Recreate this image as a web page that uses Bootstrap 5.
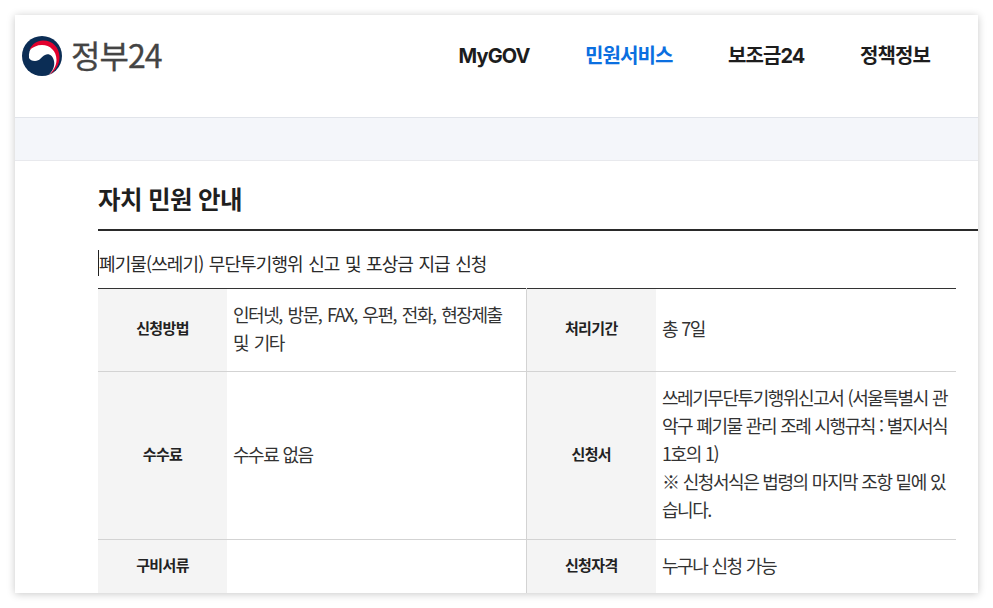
<!DOCTYPE html>
<html lang="ko">
<head>
<meta charset="utf-8">
<title>자치 민원 안내</title>
<link href="https://cdn.jsdelivr.net/npm/bootstrap@5.3.0/dist/css/bootstrap.min.css" rel="stylesheet">
<style>
html,body{height:100%;overflow:hidden;background:#fff}
body{padding:15px;font-family:"Noto Sans CJK KR","Noto Sans",sans-serif;color:#222;letter-spacing:-.04em}
.sheet{width:963px;height:578px;overflow:hidden;background:#fff;box-shadow:0 1px 8px rgba(0,0,0,.22)}
.topbar{height:103px;padding:0 48px 20px 7px;border-bottom:1px solid #e1e4ea}
.brand{font-size:32px;line-height:1;color:#444;letter-spacing:-.03em;gap:9px}
.brand span{padding-bottom:4px;-webkit-text-stroke:.3px #444}
.menu{gap:55.500px}
.menu a{font-family:Inter,"Noto Sans CJK KR",sans-serif;font-size:20px;font-weight:700;color:#1d1d1d;text-decoration:none;letter-spacing:-.045em}
.menu a.on{color:#0b6fe0}
.band{height:43px;background:#f4f6fa;border-bottom:1px solid #e8e9ed}
.body-wrap{padding-left:83px}
.ttl{font-size:24.5px;font-weight:700;line-height:1.3;margin:0;padding:22px 0 14px;border-bottom:2px solid #2a2a2a;color:#1f1f1f}
.sub{font-size:18px;line-height:26px;padding:19px 0 12px;color:#2a2a2a;letter-spacing:-.05em;word-spacing:1.3px}
.sub span{border-left:1px solid #222}
.tbl{width:858px;table-layout:fixed;margin:0;border-top:1px solid #333;--bs-table-color:#333}
.tbl th,.tbl td{padding:0 6px 2px;line-height:28px;border-bottom:1px solid #d3d3d3;vertical-align:middle}
.tbl th{background:#f4f4f4;text-align:center;font-size:15px;font-weight:700;color:#222}
.tbl .sep{border-left:1px solid #d3d3d3}
.tbl td{font-size:18px;letter-spacing:-.08em;word-spacing:.5px;word-break:break-all}
.tbl .r1>*{padding-bottom:4px}
.tbl td.roomy{padding-right:12px;word-spacing:2px}
.tbl td.longcell{padding:0 3px 4px 6px}
.r1>*{height:83px}.r2>*{height:168px}.r3>*{height:54px}
.c-a{width:129px}.c-b{width:299px}.c-c{width:130px}.c-d{width:300px}
</style>
</head>
<body>
<div class="sheet">
  <header class="topbar d-flex align-items-center justify-content-between">
    <div class="brand d-flex align-items-center">
      <svg width="40" height="40" viewBox="0 0 40 40" aria-hidden="true">
        <circle cx="20" cy="20" r="20" fill="#0b2d55"/>
        <path d="M7 22C6 12 13 6 21 6 31 6 36 13 36 22 36 30 32 36 26 39.500 31 35 33 30 32 25 31 20 27 17 23 19 19 21 18 25 13 25 10 25 8 24 7 22Z" fill="#fff"/>
        <path d="M7.500 14C10 8 15 4.500 21 4.500 31 4.500 37.500 12 37.500 21 37.500 29 33 35 27 39 31 35 34.500 30 34.500 24 34.500 15 28 9 20 9 15 9 11 11 7.500 14Z" fill="#e2002d"/>
      </svg>
      <span>정부24</span>
    </div>
    <nav class="menu d-flex align-items-center">
      <a href="#">MyGOV</a>
      <a href="#" class="on">민원서비스</a>
      <a href="#">보조금24</a>
      <a href="#">정책정보</a>
    </nav>
  </header>
  <div class="band"></div>
  <main class="body-wrap">
    <h1 class="ttl">자치 민원 안내</h1>
    <div class="sub"><span>폐기물(쓰레기) 무단투기행위 신고 및 포상금 지급 신청</span></div>
    <table class="table tbl">
      <colgroup><col class="c-a"><col class="c-b"><col class="c-c"><col class="c-d"></colgroup>
      <tbody>
        <tr class="r1"><th>신청방법</th><td class="roomy">인터넷, 방문, FAX, 우편, 전화, 현장제출 및 기타</td><th class="sep">처리기간</th><td>총 7일</td></tr>
        <tr class="r2"><th>수수료</th><td>수수료 없음</td><th class="sep">신청서</th><td class="longcell">쓰레기무단투기행위신고서 (서울특별시 관악구 폐기물 관리 조례 시행규칙 : 별지서식 1호의 1)<br>※ 신청서식은 법령의 마지막 조항 밑에 있습니다.</td></tr>
        <tr class="r3"><th>구비서류</th><td></td><th class="sep">신청자격</th><td>누구나 신청 가능</td></tr>
      </tbody>
    </table>
  </main>
</div>
</body>
</html>
